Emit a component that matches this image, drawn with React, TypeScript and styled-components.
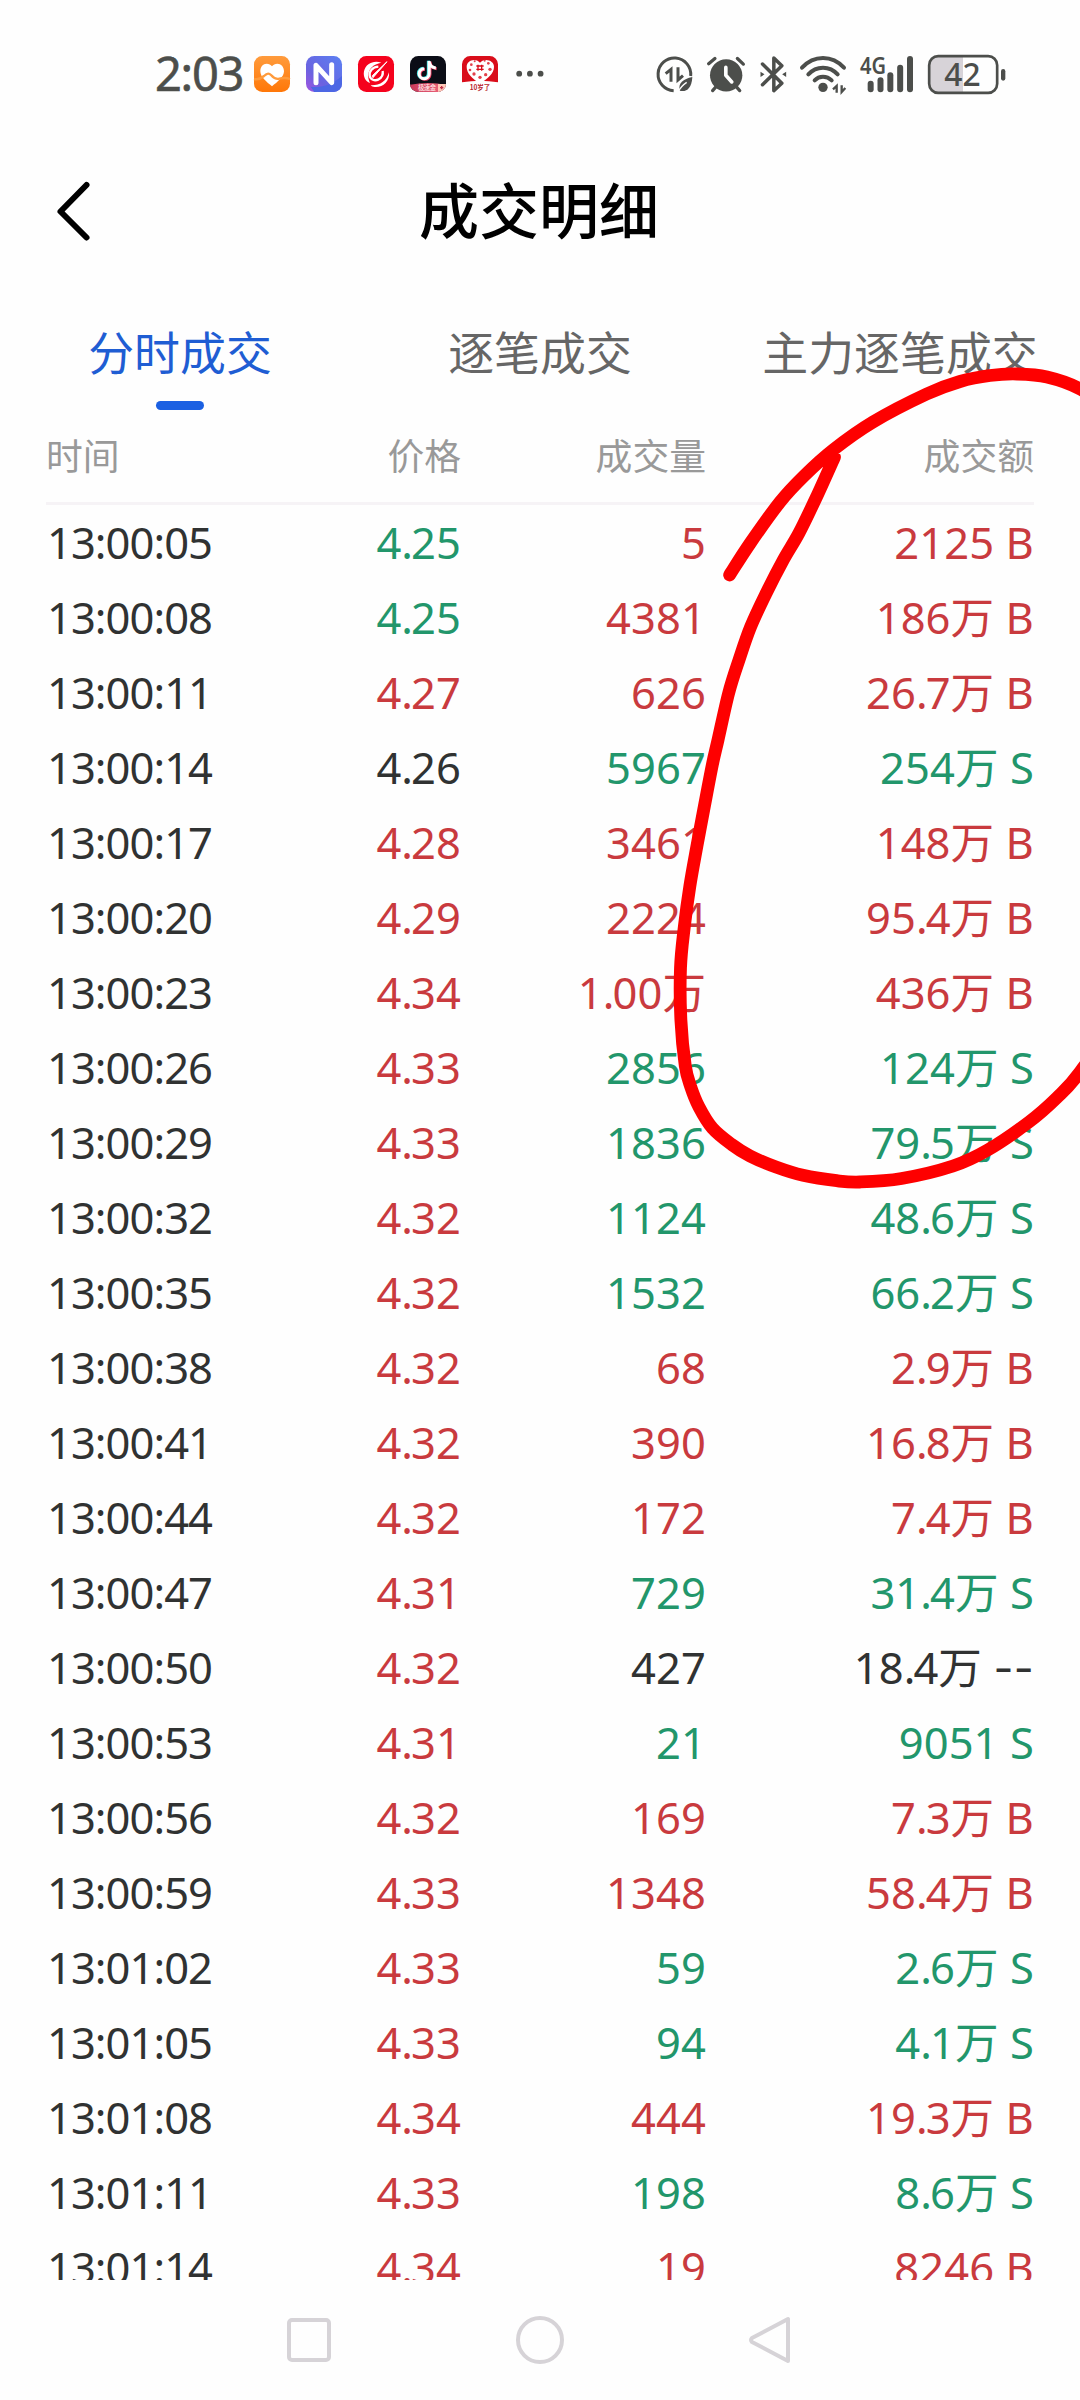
import React from "react";
import styled, { createGlobalStyle, css } from "styled-components";

const latin = `"Noto Sans", "Noto Sans CJK SC", sans-serif`;
const cjk = `"Noto Sans CJK SC", "Noto Sans", sans-serif`;
const ink = "#4c4e4b";

const GlobalStyle = createGlobalStyle`
  html, body { margin: 0; padding: 0; background: #fefefe; }
  * { box-sizing: border-box; }
`;

const Screen = styled.main`
  position: relative;
  display: flex;
  flex-direction: column;
  width: 1080px;
  height: 2400px;
  overflow: hidden;
  background: #fefefe;
  font-family: ${cjk};
`;

const StatusBar = styled.header`
  display: flex;
  align-items: center;
  justify-content: space-between;
  height: 148px;
  flex: none;
  padding: 0 74px 0 155px;
`;

const StatusGroup = styled.div<{ $gap: number }>`
  display: flex;
  align-items: center;
  gap: ${(p) => p.$gap}px;
`;

const Clock = styled.span`
  width: 83px;
  padding-bottom: 3px;
  font: 400 47px/60px ${latin};
  letter-spacing: -1.3px;
  -webkit-text-stroke: 0.6px ${ink};
  color: ${ink};
  white-space: nowrap;
`;

const Glyph = styled.svg`
  display: block;
  flex: none;
  overflow: visible;
`;

const AppBar = styled.div`
  display: grid;
  grid-template-columns: 160px 1fr 160px;
  align-items: center;
  height: 120px;
  flex: none;
`;

const BackButton = styled.button`
  display: flex;
  padding: 6px 0 0 54px;
  border: 0;
  background: none;
`;

const Title = styled.h1`
  margin: 0;
  padding-right: 2px;
  font: 500 60px/80px ${cjk};
  color: #000;
  text-align: center;
`;

const Tabs = styled.nav`
  display: grid;
  grid-template-columns: repeat(3, 1fr);
  height: 156px;
  flex: none;
  padding-top: 52px;
`;

const Tab = styled.div<{ $active?: boolean }>`
  display: flex;
  flex-direction: column;
  align-items: center;
  gap: 21px;
  font: 400 45.9px/60px ${cjk};
  color: ${(p) => (p.$active ? "#1f5dd3" : "#666666")};
  white-space: nowrap;
`;

const Indicator = styled.span`
  width: 48px;
  height: 9px;
  border-radius: 4.5px;
  background: #1b60e2;
`;

const columns = css`
  display: grid;
  grid-template-columns: 200px 215px 245px 328px;
`;

const TableHead = styled.div`
  ${columns}
  flex: none;
  height: 81px;
  margin: 0 46px 1px;
  border-bottom: 3px solid #f6f3f6;
  font: 400 36.8px/60px ${cjk};
  color: #999999;
`;

const HeadCell = styled.span<{ $left?: boolean }>`
  text-align: ${(p) => (p.$left ? "left" : "right")};
`;

const Rows = styled.div`
  flex: 1;
  min-height: 0;
  overflow: hidden;
  padding: 0 46px;
`;

const Row = styled.div`
  ${columns}
  height: 75px;
  font: 400 43.5px/73px ${latin};
`;

const tones = { k: "#303232", g: "#22966b", r: "#c93a3e" };
type Tone = keyof typeof tones;

const Cell = styled.span<{ $tone: Tone; $time?: boolean }>`
  color: ${(p) => tones[p.$tone]};
  padding-left: ${(p) => (p.$time ? 1 : 0)}px;
  text-align: ${(p) => (p.$time ? "left" : "right")};
  letter-spacing: ${(p) => (p.$time ? -0.95 : 0.1)}px;
  white-space: pre;
`;

const Point = styled.span`
  letter-spacing: -2px;
`;

const Dashes = styled.span`
  font-family: Inter, "Noto Sans", sans-serif;
  letter-spacing: 0.3px;
`;

const NavBar = styled.footer`
  display: flex;
  align-items: center;
  justify-content: space-between;
  flex: none;
  height: 120px;
  padding: 0 289px 0 287px;
`;

const Annotation = styled.svg`
  position: absolute;
  inset: 0;
  pointer-events: none;
`;

type Trade = [string, string, Tone, string, string, Tone];

const trades: Trade[] = [
  ["13:00:05", "4.25", "g", "5", "2125 B", "r"],
  ["13:00:08", "4.25", "g", "4381", "186万 B", "r"],
  ["13:00:11", "4.27", "r", "626", "26.7万 B", "r"],
  ["13:00:14", "4.26", "k", "5967", "254万 S", "g"],
  ["13:00:17", "4.28", "r", "3461", "148万 B", "r"],
  ["13:00:20", "4.29", "r", "2224", "95.4万 B", "r"],
  ["13:00:23", "4.34", "r", "1.00万", "436万 B", "r"],
  ["13:00:26", "4.33", "r", "2856", "124万 S", "g"],
  ["13:00:29", "4.33", "r", "1836", "79.5万 S", "g"],
  ["13:00:32", "4.32", "r", "1124", "48.6万 S", "g"],
  ["13:00:35", "4.32", "r", "1532", "66.2万 S", "g"],
  ["13:00:38", "4.32", "r", "68", "2.9万 B", "r"],
  ["13:00:41", "4.32", "r", "390", "16.8万 B", "r"],
  ["13:00:44", "4.32", "r", "172", "7.4万 B", "r"],
  ["13:00:47", "4.31", "r", "729", "31.4万 S", "g"],
  ["13:00:50", "4.32", "r", "427", "18.4万 --", "k"],
  ["13:00:53", "4.31", "r", "21", "9051 S", "g"],
  ["13:00:56", "4.32", "r", "169", "7.3万 B", "r"],
  ["13:00:59", "4.33", "r", "1348", "58.4万 B", "r"],
  ["13:01:02", "4.33", "r", "59", "2.6万 S", "g"],
  ["13:01:05", "4.33", "r", "94", "4.1万 S", "g"],
  ["13:01:08", "4.34", "r", "444", "19.3万 B", "r"],
  ["13:01:11", "4.33", "r", "198", "8.6万 S", "g"],
  ["13:01:14", "4.34", "r", "19", "8246 B", "r"],
];

// Tightens the decimal point and widens the neutral "--" marker.
const Figure = ({ text }: { text: string }) => (
  <>
    {text.split(/(\.|--)/).map((part, i) =>
      part === "." ? <Point key={i}>.</Point> : part === "--" ? <Dashes key={i}>--</Dashes> : part
    )}
  </>
);

// Pen stroke drawn by hand over the amount column.
const pen: [number, number][] = [
  [729.6, 575], [750, 543.5], [780, 502], [804, 476], [833, 450], [873, 422],
  [926.7, 394], [960, 381.5], [990, 375.5], [1017, 374], [1047, 377], [1080, 389],
  [1120, 418], [1170, 520], [1190, 700], [1165, 900], [1125, 1005], [1080, 1072],
  [1056.6, 1098], [1029, 1122], [987.7, 1150], [953, 1166], [901.6, 1178.5],
  [860, 1182], [836.7, 1180.7], [803, 1175.3], [776.7, 1167.3], [750, 1156],
  [731.7, 1144.5], [712.3, 1128], [699, 1107], [690.7, 1086.7], [685.3, 1066],
  [680.9, 1020], [680.5, 968], [684.3, 927], [689.8, 886.5], [697, 845.7],
  [704.6, 805], [712.5, 764], [718, 740], [728.7, 693], [739, 660], [750.7, 626.7],
  [766.3, 593], [783.3, 560], [799, 533], [816, 498], [834.5, 457],
];

function smooth(p: [number, number][]) {
  let d = `M${p[0][0]} ${p[0][1]}`;
  for (let i = 0; i < p.length - 1; i++) {
    const a = p[Math.max(i - 1, 0)];
    const b = p[i];
    const c = p[i + 1];
    const e = p[Math.min(i + 2, p.length - 1)];
    d += `C${b[0] + (c[0] - a[0]) / 6} ${b[1] + (c[1] - a[1]) / 6} ${c[0] - (e[0] - b[0]) / 6} ${c[1] - (e[1] - b[1]) / 6} ${c[0]} ${c[1]}`;
  }
  return d;
}

const HealthIcon = () => (
  <Glyph width="36" height="36" viewBox="0 0 108 108">
    <defs>
      <linearGradient id="health" x1="0" y1="0" x2="0" y2="1">
        <stop offset="0" stopColor="#ff9b3c" />
        <stop offset="1" stopColor="#ff7708" />
      </linearGradient>
    </defs>
    <rect width="108" height="108" rx="25" fill="url(#health)" />
    <path d="M54 91C38 78 19 63 19 46c0-14 8-23 19-23 7 0 12 3 16 8 4-5 9-8 16-8 11 0 20 9 20 23 0 17-20 32-36 45Z" fill="#fff" />
    <path d="M0 69c12 3 23-3 30-9 9-9 14-10 21-3 8 9 15 14 25 11 12-3 19-4 32 1" fill="none" stroke="#ff9b3c" strokeWidth="7" />
  </Glyph>
);

const NIcon = () => (
  <Glyph width="36" height="36" viewBox="0 0 108 108">
    <defs>
      <linearGradient id="nbg" x1="0" y1="1" x2="1" y2="0">
        <stop offset="0" stopColor="#a353e0" />
        <stop offset=".35" stopColor="#6a63e0" />
        <stop offset="1" stopColor="#5b80f2" />
      </linearGradient>
    </defs>
    <rect width="108" height="108" rx="25" fill="url(#nbg)" />
    <path d="M14 92c34 4 65-6 94-32v23a25 25 0 0 1-25 25H25Z" fill="#4d67e4" />
    <path d="M30 80V28L77 80V26" fill="none" stroke="#fff" strokeWidth="15" strokeLinecap="round" strokeLinejoin="round" />
  </Glyph>
);

const SwirlIcon = () => (
  <Glyph width="36" height="36" viewBox="0 0 108 108">
    <rect width="108" height="108" rx="25" fill="#f5021d" />
    <path d="M70 20C48 12 23 22 18 46c-3 16 4 30 18 35-8-18-7-34 4-46 8-9 18-12 30-15Z" fill="#fff" />
    <path d="M93 49c3 28-19 46-43 44-5 0-9-2-12-5 28 1 47-12 55-39Z" fill="#fff" />
    <path d="M61 32c-18 1-28 14-26 27 2 12 15 17 27 11 9-5 14-13 12-25" fill="none" stroke="#fff" strokeWidth="7" />
    <path d="M87 17 45 65l-2-6Z" fill="#fff" stroke="#fff" strokeWidth="3" />
  </Glyph>
);

const Note = ({ color, x, y }: { color: string; x: number; y: number }) => (
  <path
    transform={`translate(${x} ${y})`}
    d="M59 16v38a15 15 0 1 1-15-15M59 16c1 13 9 20 20 21"
    fill="none"
    stroke={color}
    strokeWidth="9"
  />
);

const TikIcon = () => (
  <Glyph width="36" height="36" viewBox="0 0 108 108">
    <defs>
      <clipPath id="tik"><rect width="108" height="108" rx="25" /></clipPath>
      <linearGradient id="tikband"><stop offset="0" stopColor="#c93a59" /><stop offset="1" stopColor="#f06a80" /></linearGradient>
    </defs>
    <g clipPath="url(#tik)">
      <rect width="108" height="108" fill="#0b0d16" />
      <Note color="#41e4e4" x={-4} y={-2} />
      <Note color="#f44368" x={1} y={1} />
      <Note color="#fff" x={-1.5} y={-1} />
      <path d="M0 86Q54 76 108 86V108H0Z" fill="url(#tikband)" />
      <path d="M84 84h24v24H84Z" fill="#ffc9b8" />
      <path d="M90 95h10M95 90v10" stroke="#bf3049" strokeWidth="4" />
      <text x="24" y="102" fontSize="19" fontFamily="Noto Sans CJK SC" fontWeight="500" fill="#ffe4e4" textLength="54">极速金</text>
    </g>
  </Glyph>
);

const PddIcon = () => (
  <Glyph width="36" height="36" viewBox="0 0 108 108">
    <path d="M0 25A25 25 0 0 1 25 0h58a25 25 0 0 1 25 25v54Q54 70 0 79Z" fill="#d90d1a" />
    <path d="M54 82C30 68 14 52 14 32 14 15 38 4 54 20 70 4 96 15 96 32c0 20-18 36-42 50Z" fill="#fff" />
    <path d="M48 26v18M59 26v18M43 30h22M43 40h22" stroke="#d90d1a" strokeWidth="4" />
    <g fill="#e2414b">
      <circle cx="28" cy="26" r="4" /><circle cx="79" cy="22" r="4" /><circle cx="24" cy="42" r="4" />
      <circle cx="84" cy="40" r="5" /><circle cx="36" cy="54" r="5" /><circle cx="71" cy="56" r="5" />
      <circle cx="54" cy="64" r="5" /><circle cx="38" cy="16" r="3" /><circle cx="68" cy="14" r="3" />
    </g>
    <text x="23" y="101" fontSize="22" fontFamily="Noto Sans CJK SC" fontWeight="700" fill="#b8232c" textLength="62" lengthAdjust="spacingAndGlyphs">10岁了</text>
  </Glyph>
);

const MoreDots = () => (
  <Glyph width="30" height="8" viewBox="0 0 30 8" fill={ink}>
    <circle cx="5.2" cy="3.7" r="2.9" /><circle cx="15.9" cy="3.7" r="2.9" /><circle cx="26.6" cy="3.7" r="2.9" />
  </Glyph>
);

const DataSaver = () => (
  <Glyph width="37" height="37" viewBox="51 44 111 111" fill="none" stroke={ink} strokeWidth="9">
    <path d="M104 148A49 49 0 1 1 155 104" />
    <path d="M80 97 96 84v37" strokeWidth="9" />
    <path d="M117 78v38l15-13" strokeWidth="9" />
    <path d="M160 107c-2 36-19 46-38 41-5-23 10-35 38-41Z" fill={ink} stroke="none" />
    <path d="M117 153c6-14 14-22 26-30" stroke="#fefefe" strokeWidth="4" />
  </Glyph>
);

const Alarm = () => (
  <Glyph width="38" height="37" viewBox="205 44 115 111" stroke={ink} strokeWidth="10" strokeLinecap="round" fill="none">
    <circle cx="263" cy="102" r="49" fill={ink} stroke="none" />
    <path d="M210 67 229 51M297 51l18 17M222 148l12-13M304 148l-12-13" />
    <path d="M262 78v24l18 20" stroke="#fefefe" strokeWidth="11" strokeLinejoin="round" />
  </Glyph>
);

const Bluetooth = () => (
  <Glyph width="27" height="37" viewBox="359 44 80 111" fill="none" stroke={ink} strokeWidth="10.5" strokeLinejoin="round" strokeLinecap="round">
    <path d="m369 68 58 58-24 22V50l24 23-58 57" />
    <path d="m363 91 12 8-12 8ZM440 91l-12 8 12 8Z" fill={ink} stroke="none" />
  </Glyph>
);

const Wifi = () => (
  <Glyph width="46" height="37" viewBox="478 44 138 111" fill="none" stroke={ink} strokeWidth="12" strokeLinecap="round">
    <path d="M484 79Q511 50 547 50T610 79" />
    <path d="M503 99Q521 79 547 79T591 99" />
    <path d="M522 117Q532 106 547 106T573 117" />
    <circle cx="547" cy="138" r="14" fill={ink} stroke="none" />
    <path d="m577 144 11-10v20M603 132v20l11-12" strokeWidth="7" strokeLinecap="butt" />
  </Glyph>
);

const Signal = () => (
  <Glyph width="54" height="37" viewBox="661 44 162 111" fill={ink}>
    <text x="661" y="98" fontSize="70" fontFamily="Noto Sans" fontWeight="600" textLength="78" lengthAdjust="spacingAndGlyphs">4G</text>
    {[118, 108, 93, 70, 44].map((top, i) => (
      <rect key={top} x={684 + i * 29.5} y={top} width="18" height={153 - top} rx="9" />
    ))}
  </Glyph>
);

const Battery = () => (
  <Glyph width="78" height="39" viewBox="865 40 234 117">
    <path d="M970 44H894a25 25 0 0 0-25 25v60a25 25 0 0 0 25 25h76Z" fill="#d7d3d8" />
    <rect x="868.5" y="43.5" width="204" height="110" rx="27" fill="none" stroke={ink} strokeWidth="8" />
    <rect x="1084" y="82" width="13" height="35" rx="6.5" fill={ink} />
    <text x="914" y="134" fontSize="99" fontFamily="Noto Sans" fontWeight="500" fill={ink} textLength="109" lengthAdjust="spacingAndGlyphs">42</text>
  </Glyph>
);

export default function App() {
  return (
    <Screen>
      <GlobalStyle />
      <StatusBar>
        <StatusGroup $gap={16}>
          <Clock>2:03</Clock>
          <HealthIcon />
          <NIcon />
          <SwirlIcon />
          <TikIcon />
          <PddIcon />
          <MoreDots />
        </StatusGroup>
        <StatusGroup $gap={14}>
          <DataSaver />
          <Alarm />
          <Bluetooth />
          <Wifi />
          <Signal />
          <Battery />
        </StatusGroup>
      </StatusBar>
      <AppBar>
        <BackButton aria-label="返回">
          <Glyph width="36" height="60" viewBox="0 0 36 60" fill="none" stroke="#000" strokeWidth="6" strokeLinecap="round" strokeLinejoin="round">
            <path d="M32.5 4 6.5 30.5l26 26" />
          </Glyph>
        </BackButton>
        <Title>成交明细</Title>
      </AppBar>
      <Tabs>
        <Tab $active>
          分时成交
          <Indicator />
        </Tab>
        <Tab>逐笔成交</Tab>
        <Tab>主力逐笔成交</Tab>
      </Tabs>
      <TableHead>
        <HeadCell $left>时间</HeadCell>
        <HeadCell>价格</HeadCell>
        <HeadCell>成交量</HeadCell>
        <HeadCell>成交额</HeadCell>
      </TableHead>
      <Rows>
        {trades.map(([time, price, priceTone, volume, amount, tone]) => (
          <Row key={time}>
            <Cell $tone="k" $time>{time}</Cell>
            <Cell $tone={priceTone}><Figure text={price} /></Cell>
            <Cell $tone={tone}><Figure text={volume} /></Cell>
            <Cell $tone={tone}><Figure text={amount} /></Cell>
          </Row>
        ))}
      </Rows>
      <NavBar>
        <Glyph width="44" height="44" viewBox="0 0 44 44" fill="none" stroke="#d6d3d7" strokeWidth="4">
          <rect x="2" y="2" width="40" height="40" rx="3" />
        </Glyph>
        <Glyph width="48" height="48" viewBox="0 0 48 48" fill="none" stroke="#d6d3d7" strokeWidth="4">
          <circle cx="24" cy="24" r="22" />
        </Glyph>
        <Glyph width="42" height="48" viewBox="0 0 42 48" fill="none" stroke="#d6d3d7" strokeWidth="4" strokeLinejoin="round">
          <path d="M39 3v42L3 26q-2-2 0-4Z" />
        </Glyph>
      </NavBar>
      <Annotation width="1080" height="2400" viewBox="0 0 1080 2400" fill="none">
        <path d={smooth(pen)} stroke="#fe0000" strokeWidth="12.8" strokeLinecap="round" strokeLinejoin="round" />
      </Annotation>
    </Screen>
  );
}
